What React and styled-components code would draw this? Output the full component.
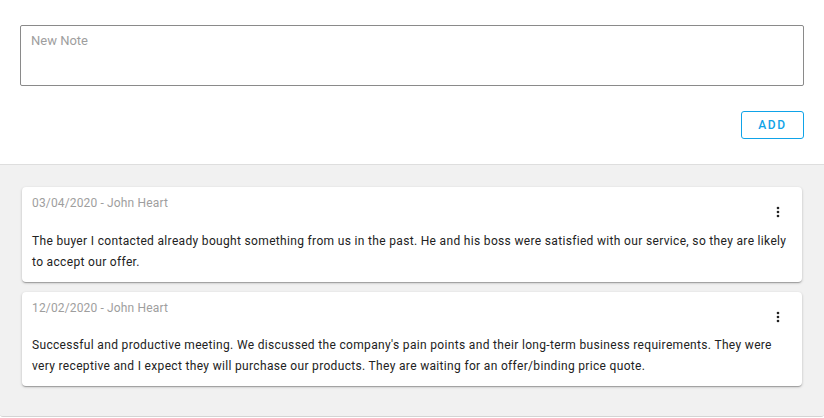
import styled, { createGlobalStyle } from "styled-components";

const GlobalStyle = createGlobalStyle`
    html, body {
        margin: 0;
        padding: 0;
        background: #fff;
        font-family: Roboto, "Liberation Sans", sans-serif;
    }
`;

const notes = [
    {
        id: 1,
        date: "03/04/2020",
        author: "John Heart",
        text: "The buyer I contacted already bought something from us in the past. He and his boss were satisfied with our service, so they are likely to accept our offer.",
    },
    {
        id: 2,
        date: "12/02/2020",
        author: "John Heart",
        text: "Successful and productive meeting. We discussed the company's pain points and their long-term business requirements. They were very receptive and I expect they will purchase our products. They are waiting for an offer/binding price quote.",
    },
];

const MoreIcon = () => (
    <svg width="16" height="16" viewBox="0 0 24 24" fill="#222">
        <circle cx="12" cy="6" r="2" />
        <circle cx="12" cy="12" r="2" />
        <circle cx="12" cy="18" r="2" />
    </svg>
);

const App = () => {
    return (
        <>
            <GlobalStyle />
            <Page>
                <Editor>
                    <NoteInput placeholder="New Note" />
                    <Actions>
                        <AddButton type="button">Add</AddButton>
                    </Actions>
                </Editor>
                <NoteList>
                    {notes.map((note) => (
                        <NoteCard key={note.id}>
                            <NoteHeader>
                                <NoteMeta>
                                    {note.date} - {note.author}
                                </NoteMeta>
                                <MenuButton type="button">
                                    <MoreIcon />
                                </MenuButton>
                            </NoteHeader>
                            <NoteText>{note.text}</NoteText>
                        </NoteCard>
                    ))}
                </NoteList>
            </Page>
        </>
    );
};

const Page = styled.div`
    width: 824px;
    display: flex;
    flex-direction: column;
`;

const Editor = styled.section`
    padding: 25px 20px 25px;
    background: #fff;
    border-bottom: 1px solid #dedede;
    display: flex;
    flex-direction: column;
`;

const NoteInput = styled.textarea`
    box-sizing: border-box;
    width: 100%;
    height: 61px;
    margin: 0;
    padding: 7px 10px;
    border: 1px solid #8a8a8a;
    border-radius: 2px;
    resize: none;
    outline: none;
    font-family: inherit;
    font-size: 13px;
    line-height: 16px;
    color: #333;

    &::placeholder {
        color: #9e9e9e;
    }
`;

const Actions = styled.div`
    display: flex;
    justify-content: flex-end;
    margin-top: 25px;
`;

const AddButton = styled.button`
    box-sizing: border-box;
    width: 63px;
    height: 28px;
    padding: 0;
    border: 1px solid #0fa3e8;
    border-radius: 3px;
    background: #fff;
    color: #0fa3e8;
    font-family: inherit;
    font-size: 12px;
    font-weight: 500;
    letter-spacing: 1.6px;
    text-transform: uppercase;
    cursor: pointer;
`;

const NoteList = styled.section`
    background: #f1f1f1;
    padding: 22px 22px 30px;
    display: flex;
    flex-direction: column;
    gap: 10px;
    border-bottom: 1px solid #d4d4d4;
    border-radius: 0 0 3px 3px;
`;

const NoteCard = styled.article`
    background: #fff;
    border-radius: 4px;
    padding: 10px 10px 9px;
    box-shadow: 0 1px 3px rgba(0, 0, 0, 0.2), 0 1px 1px rgba(0, 0, 0, 0.14),
        0 2px 1px -1px rgba(0, 0, 0, 0.12);
`;

const NoteHeader = styled.div`
    display: flex;
    justify-content: space-between;
    align-items: flex-start;
`;

const NoteMeta = styled.span`
    font-size: 12px;
    line-height: 12px;
    letter-spacing: 0.15px;
    color: #9e9e9e;
`;

const MenuButton = styled.button`
    display: flex;
    width: 16px;
    height: 16px;
    margin: 7px 6px 0 0;
    padding: 0;
    border: none;
    background: none;
    cursor: pointer;
`;

const NoteText = styled.p`
    margin: 10.5px 0 0;
    font-size: 12px;
    line-height: 21px;
    letter-spacing: 0.33px;
    color: #222;
`;

export default App;
